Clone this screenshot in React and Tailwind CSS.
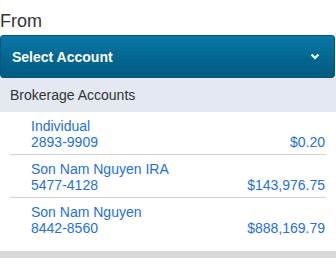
export default function App() {
  const rows = [
    { name: "Individual", num: "2893-9909", amt: "$0.20" },
    { name: "Son Nam Nguyen IRA", num: "5477-4128", amt: "$143,976.75" },
    { name: "Son Nam Nguyen", num: "8442-8560", amt: "$888,169.79" },
  ];
  return (
    <div className="w-[336px] h-[258px] bg-white overflow-hidden" style={{ fontFamily: '"Liberation Sans", Arial, sans-serif' }}>
      <div className="pt-[9px] text-[18px] leading-[24px] text-[#333]">From</div>
      <div className="mt-[2px] w-[335px] h-[43px] rounded-[3px] border border-[#00587c] bg-gradient-to-b from-[#0a77a5] to-[#005a80] flex items-center justify-between pl-[11px] pr-[14px]">
        <span className="text-white font-bold text-[14px] leading-[16px]">Select Account</span>
        <svg width="10" height="7" viewBox="0 0 10 7">
          <path d="M1.5 1.5 L5 5 L8.5 1.5" fill="none" stroke="white" strokeWidth="2.2" />
        </svg>
      </div>
      <div className="h-[34px] bg-[#e4e8f0] flex items-center pl-[10px] text-[14px] leading-[16px] text-[#333]">
        Brokerage Accounts
      </div>
      <div className="px-[10px] pb-[11px]">
        {rows.map((r, i) => (
          <div
            key={i}
            className={`flex items-end justify-between pl-[21px] pr-[1px] pt-[6px] pb-[4px] text-[14px] leading-[16px] text-[#2470dc] ${i < rows.length - 1 ? "border-b border-[#d0d0d0]" : ""}`}
          >
            <div className="flex flex-col">
              <span>{r.name}</span>
              <span>{r.num}</span>
            </div>
            <span>{r.amt}</span>
          </div>
        ))}
      </div>
      <div className="h-[10px] bg-[#d9d9d9]" />
    </div>
  );
}
